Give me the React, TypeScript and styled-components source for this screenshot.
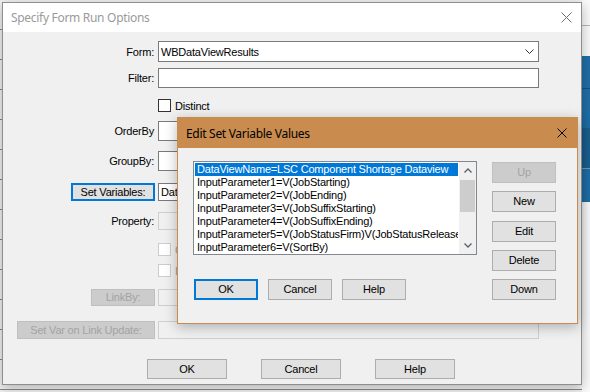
import React from "react";
import styled, { createGlobalStyle, css } from "styled-components";

const GlobalStyle = createGlobalStyle`
  html, body {
    margin: 0;
    padding: 0;
  }
  body {
    width: 590px;
    height: 392px;
    overflow: hidden;
    background: #f4f4f4;
    font-family: "Liberation Sans", Arial, sans-serif;
    font-size: 11px;
    letter-spacing: -0.2px;
    color: #000;
  }
`;

const Desktop = styled.div`
  position: relative;
  width: 590px;
  height: 392px;
  overflow: hidden;
  background: #f6f6f6;
`;

/* the application sitting behind the dialogs */
const BackApp = styled.div`
  position: absolute;
  inset: 0;
  display: grid;
  grid-template-columns: 1fr 8px;
`;

const BackLeft = styled.div`
  background: repeating-linear-gradient(
    to bottom,
    #f2f2f2 0px,
    #f2f2f2 29px,
    #8a8a8a 29px,
    #8a8a8a 30px
  );
`;

const BackRight = styled.div`
  display: flex;
  flex-direction: column;
  padding-top: 25px;
  background: #fafafa;
`;

const BackRule = styled.div`
  height: 1px;
  background: #b5b5b5;
  margin-bottom: 30px;
`;

const BluePanel = styled.div`
  height: 146px;
  background: linear-gradient(
    to bottom,
    #1f6ea6 0px,
    #1f6ea6 32px,
    #16507a 32px,
    #16507a 33px,
    #1f6ea6 33px,
    #1f6ea6 72px,
    #1a5f90 72px,
    #1a5f90 112px,
    #7f96a8 112px,
    #7f96a8 113px,
    #1f6ea6 113px
  );
`;

const Window = styled.div<{ $left: number; $top: number; $w: number; $h: number; $accent?: string }>`
  position: absolute;
  left: ${(p) => p.$left}px;
  top: ${(p) => p.$top}px;
  width: ${(p) => p.$w}px;
  height: ${(p) => p.$h}px;
  box-sizing: border-box;
  border: 1px solid ${(p) => p.$accent || "#8e8e8e"};
  background: #f0f0f0;
  box-shadow: 0 3px 12px rgba(0, 0, 0, 0.28);
  display: flex;
  flex-direction: column;
`;

const TitleBar = styled.div<{ $bg: string; $h: number }>`
  height: ${(p) => p.$h}px;
  flex: none;
  background: ${(p) => p.$bg};
  display: flex;
  align-items: center;
  justify-content: space-between;
`;

const TitleText = styled.span<{ $color: string; $pad: number }>`
  padding-left: ${(p) => p.$pad}px;
  color: ${(p) => p.$color};
  font-family: "Noto Sans", "Open Sans", sans-serif;
  font-size: 12px;
  letter-spacing: -0.3px;
`;

const CloseBox = styled.span<{ $pad: number }>`
  display: flex;
  padding-right: ${(p) => p.$pad}px;
`;

const CloseIcon: React.FC<{ color: string; size: number }> = ({ color, size }) => (
  <svg width={size} height={size} viewBox={`0 0 ${size} ${size}`}>
    <path
      d={`M0.5 0.5 L${size - 0.5} ${size - 0.5} M${size - 0.5} 0.5 L0.5 ${size - 0.5}`}
      stroke={color}
      strokeWidth="1"
      fill="none"
    />
  </svg>
);

/* ---------- outer dialog ---------- */

const FormBody = styled.div`
  display: flex;
  flex-direction: column;
  padding-top: 9px;
`;

const Row = styled.div<{ $h: number; $mt?: number }>`
  display: grid;
  grid-template-columns: 152px 381px;
  column-gap: 3px;
  height: ${(p) => p.$h}px;
  margin-top: ${(p) => p.$mt || 0}px;
  align-items: center;
`;

const Label = styled.span`
  text-align: right;
  padding-right: 1px;
  white-space: nowrap;
`;

const ButtonCell = styled.div`
  display: flex;
  justify-content: flex-end;
  height: 100%;
`;

const Field = styled.div<{ $disabled?: boolean; $h?: number }>`
  box-sizing: border-box;
  height: ${(p) => p.$h || 20}px;
  border: 1px solid ${(p) => (p.$disabled ? "#cfcfcf" : "#7a7a7a")};
  background: ${(p) => (p.$disabled ? "#f0f0f0" : "#fff")};
  display: flex;
  align-items: center;
  justify-content: space-between;
  padding: 0 4px 0 2px;
  white-space: nowrap;
  overflow: hidden;
`;

const CheckLine = styled.label<{ $disabled?: boolean }>`
  display: flex;
  align-items: center;
  gap: 4px;
  color: ${(p) => (p.$disabled ? "#a0a0a0" : "#000")};
`;

const CheckBox = styled.span<{ $disabled?: boolean }>`
  box-sizing: border-box;
  width: 13px;
  height: 13px;
  border: 1px solid ${(p) => (p.$disabled ? "#cccccc" : "#333")};
  background: #fff;
`;

type BtnKind = "normal" | "focused" | "disabled";

const WinButton = styled.button<{ $w: number; $h: number; $kind?: BtnKind }>`
  box-sizing: border-box;
  width: ${(p) => p.$w}px;
  height: ${(p) => p.$h}px;
  margin: 0;
  padding: 0;
  font-family: inherit;
  font-size: 11px;
  letter-spacing: -0.2px;
  line-height: 1;
  color: #000;
  background: #e1e1e1;
  border: 1px solid #adadad;
  white-space: nowrap;
  ${(p) =>
    p.$kind === "focused" &&
    css`
      border: 2px solid #0078d7;
    `}
  ${(p) =>
    p.$kind === "disabled" &&
    css`
      background: #cccccc;
      border-color: #bfbfbf;
      color: #a3a3a3;
    `}
`;

const Footer = styled.div`
  display: flex;
  gap: 34px;
  margin-top: 20px;
  padding-left: 144px;
`;

const Chevron = () => (
  <svg width="9" height="5" viewBox="0 0 9 5">
    <path d="M0.5 0.5 L4.5 4.5 L8.5 0.5" stroke="#333" strokeWidth="1" fill="none" />
  </svg>
);

/* ---------- inner dialog ---------- */

const EditBody = styled.div`
  display: grid;
  grid-template-columns: 284px 64px;
  column-gap: 15px;
  padding: 13px 0 0 15px;
`;

const LeftCol = styled.div`
  display: flex;
  flex-direction: column;
  gap: 24px;
`;

const ListBox = styled.div`
  box-sizing: border-box;
  height: 94px;
  border: 1px solid #828790;
  background: #fff;
  display: grid;
  grid-template-columns: 1fr 17px;
`;

const Items = styled.div`
  padding: 1px 1px 0 1px;
  overflow: hidden;
`;

const Item = styled.div<{ $selected?: boolean }>`
  height: 13px;
  line-height: 13px;
  padding-left: 2px;
  white-space: nowrap;
  overflow: hidden;
  color: ${(p) => (p.$selected ? "#fff" : "#000")};
  background: ${(p) => (p.$selected ? "#0078d7" : "transparent")};
`;

const SelectedText = styled.span`
  display: inline-block;
  padding-right: 9px;
`;

const ScrollBar = styled.div`
  display: grid;
  grid-template-rows: 17px 33px 1fr 17px;
  background: #f0f0f0;
`;

const Arrow = styled.div`
  display: flex;
  align-items: center;
  justify-content: center;
`;

const Thumb = styled.div`
  margin: 1px 1px 0 1px;
  background: #cdcdcd;
`;

const ArrowIcon: React.FC<{ up?: boolean }> = ({ up }) => (
  <svg width="8" height="5" viewBox="0 0 8 5">
    <path
      d={up ? "M0.5 4.5 L4 1 L7.5 4.5" : "M0.5 0.5 L4 4 L7.5 0.5"}
      stroke="#606060"
      strokeWidth="1.3"
      fill="none"
    />
  </svg>
);

const DialogButtons = styled.div`
  display: flex;
  gap: 10px;
  padding-left: 1px;
`;

const SideButtons = styled.div`
  display: flex;
  flex-direction: column;
  justify-content: space-between;
  height: 138px;
  padding-top: 1px;
`;

const variables = [
  "DataViewName=LSC Component Shortage Dataview",
  "InputParameter1=V(JobStarting)",
  "InputParameter2=V(JobEnding)",
  "InputParameter3=V(JobSuffixStarting)",
  "InputParameter4=V(JobSuffixEnding)",
  "InputParameter5=V(JobStatusFirm)V(JobStatusReleased)",
  "InputParameter6=V(SortBy)",
];

const App: React.FC = () => {
  return (
    <Desktop>
      <GlobalStyle />
      <BackApp>
        <BackLeft />
        <BackRight>
          <BackRule />
          <BluePanel />
        </BackRight>
      </BackApp>

      <Window $left={2} $top={2} $w={580} $h={383}>
        <TitleBar $bg="#fff" $h={29}>
          <TitleText $color="#9a9a9a" $pad={8}>
            Specify Form Run Options
          </TitleText>
          <CloseBox $pad={9}>
            <CloseIcon color="#707070" size={11} />
          </CloseBox>
        </TitleBar>

        <FormBody>
          <Row $h={21}>
            <Label>Form:</Label>
            <Field $h={21}>
              <span>WBDataViewResults</span>
              <Chevron />
            </Field>
          </Row>
          <Row $h={20} $mt={6}>
            <Label>Filter:</Label>
            <Field />
          </Row>
          <Row $h={13} $mt={11}>
            <span />
            <CheckLine>
              <CheckBox />
              Distinct
            </CheckLine>
          </Row>
          <Row $h={20} $mt={9}>
            <Label>OrderBy</Label>
            <Field />
          </Row>
          <Row $h={20} $mt={10}>
            <Label>GroupBy:</Label>
            <Field />
          </Row>
          <Row $h={18} $mt={12}>
            <ButtonCell>
              <WinButton $w={84} $h={18} $kind="focused">
                Set Variables:
              </WinButton>
            </ButtonCell>
            <Field $h={18}>DataViewName=LSC Component Shortage Dataview</Field>
          </Row>
          <Row $h={18} $mt={11}>
            <Label>Property:</Label>
            <Field $h={18} $disabled />
          </Row>
          <Row $h={13} $mt={13}>
            <span />
            <CheckLine $disabled>
              <CheckBox $disabled />
              Cache Results
            </CheckLine>
          </Row>
          <Row $h={13} $mt={8}>
            <span />
            <CheckLine $disabled>
              <CheckBox $disabled />
              Include In Refresh
            </CheckLine>
          </Row>
          <Row $h={17} $mt={12}>
            <ButtonCell>
              <WinButton $w={64} $h={17} $kind="disabled">
                LinkBy:
              </WinButton>
            </ButtonCell>
            <Field $h={17} $disabled />
          </Row>
          <Row $h={18} $mt={15}>
            <ButtonCell>
              <WinButton $w={138} $h={18} $kind="disabled">
                Set Var on Link Update:
              </WinButton>
            </ButtonCell>
            <Field $h={18} $disabled />
          </Row>
          <Footer>
            <WinButton $w={80} $h={20}>
              OK
            </WinButton>
            <WinButton $w={80} $h={20}>
              Cancel
            </WinButton>
            <WinButton $w={80} $h={20}>
              Help
            </WinButton>
          </Footer>
        </FormBody>
      </Window>

      <Window $left={177} $top={117} $w={401} $h={207} $accent="#c98c4e">
        <TitleBar $bg="#c98c4e" $h={30}>
          <TitleText $color="#000" $pad={8}>
            Edit Set Variable Values
          </TitleText>
          <CloseBox $pad={10}>
            <CloseIcon color="#000" size={10} />
          </CloseBox>
        </TitleBar>
        <EditBody>
          <LeftCol>
            <ListBox>
              <Items>
                {variables.map((v, i) => (
                  <Item key={v} $selected={i === 0}>
                    {i === 0 ? <SelectedText>{v}</SelectedText> : v}
                  </Item>
                ))}
              </Items>
              <ScrollBar>
                <Arrow>
                  <ArrowIcon up />
                </Arrow>
                <Thumb />
                <span />
                <Arrow>
                  <ArrowIcon />
                </Arrow>
              </ScrollBar>
            </ListBox>
            <DialogButtons>
              <WinButton $w={64} $h={21} $kind="focused">
                OK
              </WinButton>
              <WinButton $w={64} $h={21}>
                Cancel
              </WinButton>
              <WinButton $w={64} $h={21}>
                Help
              </WinButton>
            </DialogButtons>
          </LeftCol>
          <SideButtons>
            <WinButton $w={64} $h={21} $kind="disabled">
              Up
            </WinButton>
            <WinButton $w={64} $h={21}>
              New
            </WinButton>
            <WinButton $w={64} $h={21}>
              Edit
            </WinButton>
            <WinButton $w={64} $h={21}>
              Delete
            </WinButton>
            <WinButton $w={64} $h={21}>
              Down
            </WinButton>
          </SideButtons>
        </EditBody>
      </Window>
    </Desktop>
  );
};

export default App;
